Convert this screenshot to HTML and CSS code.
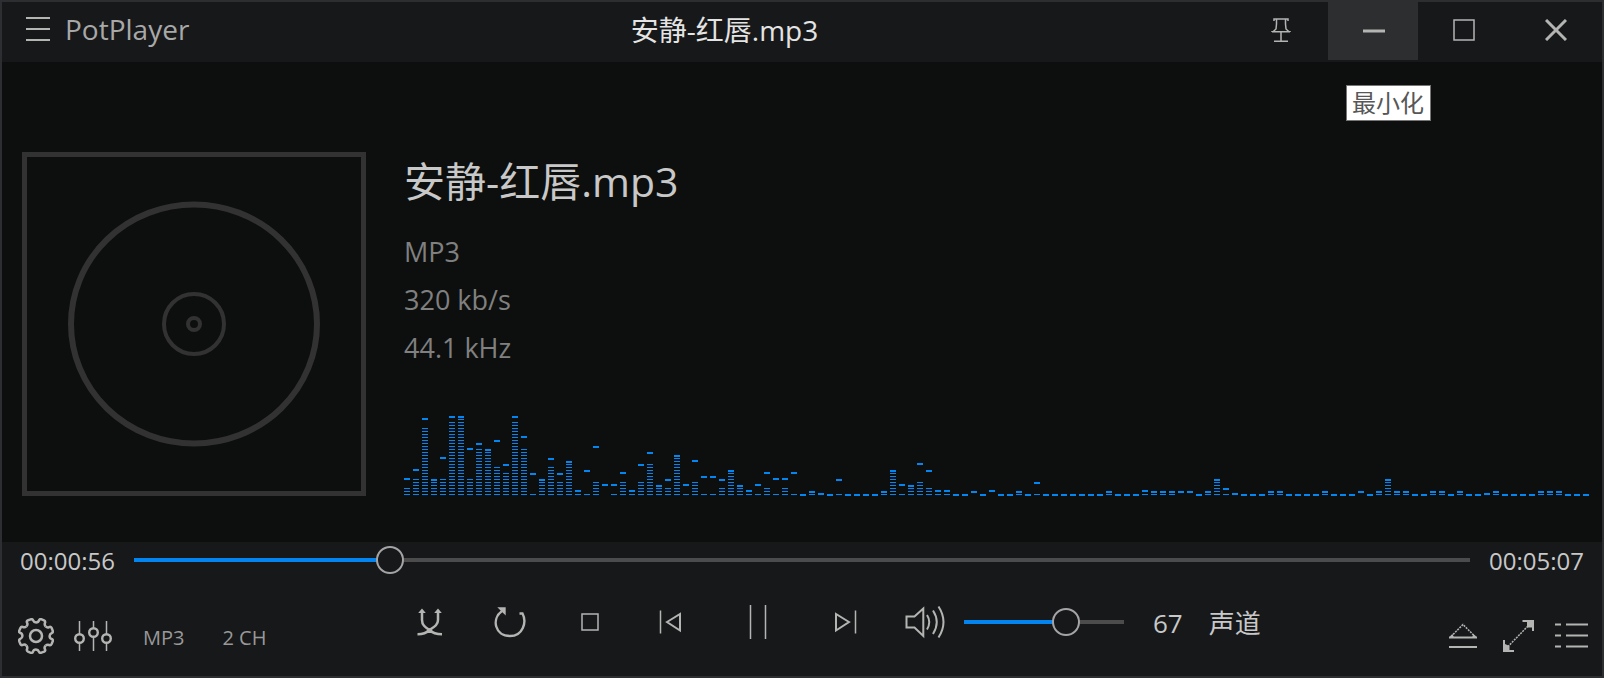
FILE: index.html
```html
<!DOCTYPE html>
<html lang="zh-CN">
<head>
<meta charset="utf-8">
<title>安静-红唇.mp3 - PotPlayer</title>
<link rel="stylesheet" href="styles.css">
</head>
<body>
<div class="player">
  <header class="titlebar">
    <div class="brand">
      <button class="icon-btn" type="button" aria-label="菜单">
        <svg width="26" height="26" viewBox="0 0 26 26"><path d="M1 2H25M1 13H25M1 24H25" stroke-width="2"/></svg>
      </button>
      <span class="brand-name">PotPlayer</span>
    </div>
    <div class="window-title">安静-红唇.mp3</div>
    <div class="window-buttons">
      <button class="win-btn" type="button" aria-label="置顶">
        <svg width="22" height="26" viewBox="0 0 22 26"><path d="M3 4V2H17V4M5.5 2V7L5 12L2 14.7M14.5 2V7L15 12L18 14.7M1 15V14.7H19V15M10 15V24M3 24.3H17"/></svg>
      </button>
      <div class="minimize">
        <button class="win-btn is-hover" type="button" aria-label="最小化" aria-describedby="tip">
          <svg width="22" height="4" viewBox="0 0 22 4"><path d="M0 2H22" stroke-width="3"/></svg>
        </button>
        <div class="tooltip" id="tip" role="tooltip">最小化</div>
      </div>
      <button class="win-btn" type="button" aria-label="最大化">
        <svg width="22" height="22" viewBox="0 0 22 22"><path d="M1 1H21V21H1Z"/></svg>
      </button>
      <button class="win-btn" type="button" aria-label="关闭">
        <svg width="22" height="22" viewBox="0 0 22 22"><path d="M1 1L21 21M21 1L1 21" stroke-width="3"/></svg>
      </button>
    </div>
  </header>

  <main class="stage">
    <svg class="cover" viewBox="0 0 344 344" role="img" aria-label="唱片">
      <rect x="2.5" y="2.5" width="339" height="339" stroke-width="5"/>
      <ellipse cx="172" cy="172" rx="123" ry="119.5" stroke-width="6"/>
      <circle cx="172" cy="172" r="30" stroke-width="4"/>
      <circle cx="172" cy="172" r="6" stroke-width="4"/>
    </svg>
    <section class="track">
      <h1 class="track-name">安静-红唇.mp3</h1>
      <ul class="track-info">
        <li>MP3</li>
        <li>320 kb/s</li>
        <li>44.1 kHz</li>
      </ul>
      <div class="spectrum" id="spectrum" aria-hidden="true"></div>
    </section>
  </main>

  <footer class="controls">
    <div class="seek-row">
      <time class="time">00:00:56</time>
      <input class="slider seek" type="range" min="0" max="1000" value="185" style="--fill:19%" aria-label="播放进度">
      <time class="time">00:05:07</time>
    </div>
    <div class="button-row">
      <div class="tools">
        <button class="icon-btn" type="button" aria-label="设置">
          <svg width="36" height="36" viewBox="-18 -18 36 36">
            <defs><path id="tooth" d="M0-13.6Q2.4-13.6 3-15.6Q3.5-17.3 5.2-16.8L8-15.6Q9.6-14.8 9-13.2Q8.2-11.2 9.6-9.6"/></defs>
            <g stroke-width="2.5">
              <use href="#tooth"/><use href="#tooth" transform="rotate(45)"/><use href="#tooth" transform="rotate(90)"/><use href="#tooth" transform="rotate(135)"/>
              <use href="#tooth" transform="rotate(180)"/><use href="#tooth" transform="rotate(225)"/><use href="#tooth" transform="rotate(270)"/><use href="#tooth" transform="rotate(315)"/>
              <circle r="6"/>
            </g>
          </svg>
        </button>
        <button class="icon-btn" type="button" aria-label="均衡器">
          <svg width="40" height="34" viewBox="0 0 40 34"><path d="M6.5 2V15M6.5 24V32M20.5 2V9M20.5 18V32M33.5 2V15M33.5 24V32"/><g stroke-width="2.4"><circle cx="6.5" cy="19.5" r="4.3"/><circle cx="20.5" cy="13.5" r="4.3"/><circle cx="33.5" cy="19.5" r="4.3"/></g></svg>
        </button>
        <span class="codec">MP3</span>
        <span class="channels">2 CH</span>
      </div>

      <div class="transport">
        <button class="icon-btn cell" type="button" aria-label="随机播放">
          <svg width="26" height="28" viewBox="0 0 26 28"><path stroke-width="2.5" d="M5 4V12C5 17 8 19 12.5 22C16 25.5 19 26.3 25 26.3M21 4V12C21 17 17 19 12.5 22C9 25.500 6 26.300 .5 26.300"/><path class="solid" d="M5 .5L8.800 5H1.200ZM21 .5L24.800 5H17.200ZM9.500 22L12.500 20L15.500 22L14 25H11Z"/></svg>
        </button>
        <button class="icon-btn cell" type="button" aria-label="循环播放">
          <svg width="32" height="32" viewBox="0 0 32 32"><path stroke-width="2.4" d="M25.500 7.500H28.500C33 16 29 30 16 30C1 30-3 13 8 5"/><path class="solid" d="M3.300 1.300H11.700V9.500Z"/></svg>
        </button>
        <button class="icon-btn cell" type="button" aria-label="停止">
          <svg width="18" height="18" viewBox="0 0 18 18"><path d="M1 1H17V17H1Z"/></svg>
        </button>
        <button class="icon-btn cell" type="button" aria-label="上一个">
          <svg width="24" height="26" viewBox="0 0 24 26"><path d="M2.500 1.500V24.500"/><path stroke-width="2" d="M9 13L22 5V21.500Z"/></svg>
        </button>
        <button class="icon-btn cell cell-wide" type="button" aria-label="暂停">
          <svg width="20" height="36" viewBox="0 0 20 36"><path d="M2.500 1V35M17.500 1V35"/></svg>
        </button>
        <button class="icon-btn cell" type="button" aria-label="下一个">
          <svg width="24" height="26" viewBox="0 0 24 26"><path d="M21.500 1.500V24.500"/><path stroke-width="2" d="M15 13L2 5V21.500Z"/></svg>
        </button>
        <button class="icon-btn cell cell-narrow" type="button" aria-label="静音">
          <svg width="40" height="34" viewBox="0 0 40 34"><path stroke-width="2" d="M1.500 11.500H9.500L18.300 3.500V31L9.500 22.500H1.500Z"/><path stroke-width="2" d="M22 10Q26.500 17 22 24.500M28 5.500Q35.500 17 28 29M33.500 1.500Q43.500 17 33.500 32.500"/></svg>
        </button>
        <input class="slider volume" type="range" min="0" max="100" value="67" style="--fill:65%" aria-label="音量">
        <output class="volume-value">67</output>
        <button class="text-btn" type="button">声道</button>
      </div>

      <div class="extras">
        <button class="icon-btn" type="button" aria-label="打开文件">
          <svg width="32" height="26" viewBox="0 0 32 26"><path d="M3 13.500L15 1.500L27 13.500" stroke-dasharray="2 1"/><path d="M1 14.500H29M1 24H29" stroke-width="2"/><path class="solid" d="M1 14.500L4.500 11L6 14.500ZM29 14.500L25.500 11L24 14.500Z"/></svg>
        </button>
        <button class="icon-btn" type="button" aria-label="全屏">
          <svg width="34" height="34" viewBox="-2 0 34 34"><path d="M26 7L6 27.500" stroke-dasharray="2 1"/><path class="solid" d="M20.500 1H32V12H30V8.500H25V3H20.500ZM1 21H3V25L7.500 27V31H12V33H1Z"/></svg>
        </button>
        <button class="icon-btn" type="button" aria-label="播放列表">
          <svg width="35" height="28" viewBox="1 0 35 28"><path d="M2 2.500H8M13 2.500H35M2 13.500H8M13 13.500H35M2 24.500H8M13 24.500H35" stroke-width="2"/></svg>
        </button>
      </div>
    </div>
  </footer>
</div>
<script src="spectrum.js"></script>
</body>
</html>
```
FILE: styles.css
```css
* { box-sizing: border-box; }

body {
  margin: 0;
  background: #0d0f0e;
  font-family: "Open Sans", "Noto Sans CJK SC", sans-serif;
  color: #c8c8c8;
}

button {
  margin: 0;
  padding: 0;
  border: 0;
  background: none;
  color: inherit;
  font: inherit;
}

svg {
  display: block;
  flex: none;
  fill: none;
  stroke: #b4b4b2;
  stroke-width: 1.5;
}

.solid { fill: #b4b4b2; stroke: none; }

.player {
  display: flex;
  flex-direction: column;
  min-height: 100vh;
  border: 2px solid #2d2e31;
}

/* Title bar */
.titlebar {
  display: flex;
  height: 60px;
  background: #17181a;
}

.brand {
  display: flex;
  align-items: center;
  gap: 14px;
  width: 211px;
  padding: 0 0 6px 23px;
}

.brand-name {
  font-size: 28px;
  line-height: 40px;
  color: #a8a8a8;
}

.window-title {
  flex: 1;
  font-size: 28px;
  line-height: 56px;
  text-align: center;
  color: #e4e4e4;
}

.window-buttons { display: flex; }

.win-btn {
  display: flex;
  align-items: center;
  justify-content: center;
  width: 92px;
  height: 58px;
  padding-bottom: 2px;
}

.minimize { position: relative; }

.is-hover {
  width: 90px;
  padding: 0 0 0 2px;
  background: #2d2e30;
}

.tooltip {
  position: absolute;
  top: 83px;
  left: 18px;
  padding: 0 6px 0 5px;
  border: 1px solid #767676;
  background: #fff;
  color: #575757;
  font-size: 24px;
  line-height: 34px;
  white-space: nowrap;
}

/* Stage */
.stage {
  display: flex;
  flex: 1;
  align-items: center;
  gap: 38px;
  padding: 90px 13px 46px 20px;
}

.cover {
  width: 344px;
  height: 344px;
  stroke: #323232;
}

.track {
  display: flex;
  flex: 1;
  flex-direction: column;
  min-width: 0;
  height: 344px;
}

.track-name {
  margin: 0;
  font-size: 41px;
  font-weight: 400;
  line-height: 58px;
}

.track-info {
  margin: 18px 0 0;
  padding: 0;
  list-style: none;
  font-size: 27px;
  line-height: 48px;
  color: #808080;
}

.spectrum {
  display: flex;
  gap: 3px;
  height: 80px;
  margin-top: auto;
  overflow: hidden;
}

.band {
  position: relative;
  flex: none;
  width: 6px;
}

.level,
.peak {
  position: absolute;
  left: 0;
  width: 100%;
}

.level {
  bottom: 1px;
  background: repeating-linear-gradient(to top, #0386f2 0 1px, transparent 1px 3px);
}

.peak {
  height: 2px;
  background: #0386f2;
}

/* Controls */
.controls { background: #17181a; }

.seek-row {
  display: flex;
  align-items: center;
  gap: 19px;
  height: 36px;
  padding: 0 18px;
}

.time {
  padding-top: 2px;
  font-size: 24px;
  line-height: 34px;
}

.slider {
  appearance: none;
  height: 28px;
  margin: 0;
  background: linear-gradient(#0384ee, #0384ee) left center / var(--fill) 4px no-repeat,
    linear-gradient(#4c4c4c, #4c4c4c) center / 100% 4px no-repeat;
}

.slider::-webkit-slider-thumb {
  appearance: none;
  width: 28px;
  height: 28px;
  border: 2px solid #a4a4a4;
  border-radius: 50%;
  background: #17181a;
}

.seek {
  flex: 1;
  min-width: 0;
}

.button-row {
  display: flex;
  height: 98px;
}

.icon-btn {
  display: flex;
  align-items: center;
  justify-content: center;
}

.tools,
.extras {
  display: flex;
  align-items: center;
  align-self: flex-end;
  height: 80px;
}

.tools {
  flex: none;
  width: 388px;
  padding-left: 16px;
  gap: 19px;
  font-size: 20px;
  line-height: 28px;
  color: #999;
}

.codec,
.channels { padding-top: 4px; }

.codec { margin: 0 19px 0 11px; }

.transport {
  display: flex;
  align-items: center;
  height: 88px;
}

.cell {
  width: 80px;
  height: 60px;
}

.cell-wide { width: 96px; }

.cell-narrow { width: 78px; }

.volume { width: 160px; }

.volume-value,
.text-btn {
  padding-top: 2px;
  font-size: 26px;
  line-height: 40px;
}

.volume-value { margin: 0 26px 0 29px; }

.extras {
  gap: 20px;
  margin-left: auto;
  padding-right: 13px;
}
```
FILE: spectrum.js
```js
// Each band: [peak height in px, number of lit segments]
const bands = [
  [16,3],[25,6],[76,23],[15,5],[37,6],[78,25],[78,26],[46,6],[51,16],[45,15],[54,10],[30,8],
  [78,25],[58,16],[21,1],[15,5],[36,10],[21,5],[33,11],[4,1],[24,1],[48,5],[10,0],[10,1],
  [22,5],[4,1],[30,5],[42,11],[9,3],[15,3],[39,13],[10,1],[34,5],[18,1],[18,1],[15,3],
  [24,8],[9,3],[4,1],[10,1],[22,3],[16,1],[16,3],[22,1],[0,0],[3,1],[1,0],[0,0],
  [15,1],[0,0],[0,0],[0,0],[0,0],[3,1],[24,8],[10,1],[9,3],[31,5],[24,3],[4,1],
  [4,1],[0,0],[0,0],[3,0],[0,0],[4,0],[0,0],[0,0],[3,1],[0,0],[12,1],[0,0],
  [0,0],[0,0],[0,0],[0,0],[0,0],[0,0],[3,1],[0,0],[0,0],[0,0],[4,1],[3,1],
  [3,1],[3,1],[3,0],[3,0],[0,0],[3,1],[15,5],[6,1],[1,0],[0,0],[0,0],[0,0],
  [3,1],[3,1],[0,0],[0,0],[0,0],[0,0],[3,1],[0,0],[0,0],[0,0],[3,0],[0,0],
  [3,1],[15,5],[3,1],[3,1],[0,0],[0,0],[3,1],[3,1],[0,0],[3,1],[0,0],[0,0],
  [1,0],[3,1],[0,0],[0,0],[0,0],[0,0],[3,1],[3,1],[3,1],[0,0],[0,0],[0,0]
];

const spectrum = document.getElementById("spectrum");
for (const [peak, segments] of bands) {
  const band = document.createElement("div");
  band.className = "band";
  if (segments > 0) {
    const level = document.createElement("div");
    level.className = "level";
    level.style.height = `${segments * 3 - 2}px`;
    band.append(level);
  }
  const cap = document.createElement("div");
  cap.className = "peak";
  cap.style.bottom = `${peak}px`;
  band.append(cap);
  spectrum.append(band);
}
```
